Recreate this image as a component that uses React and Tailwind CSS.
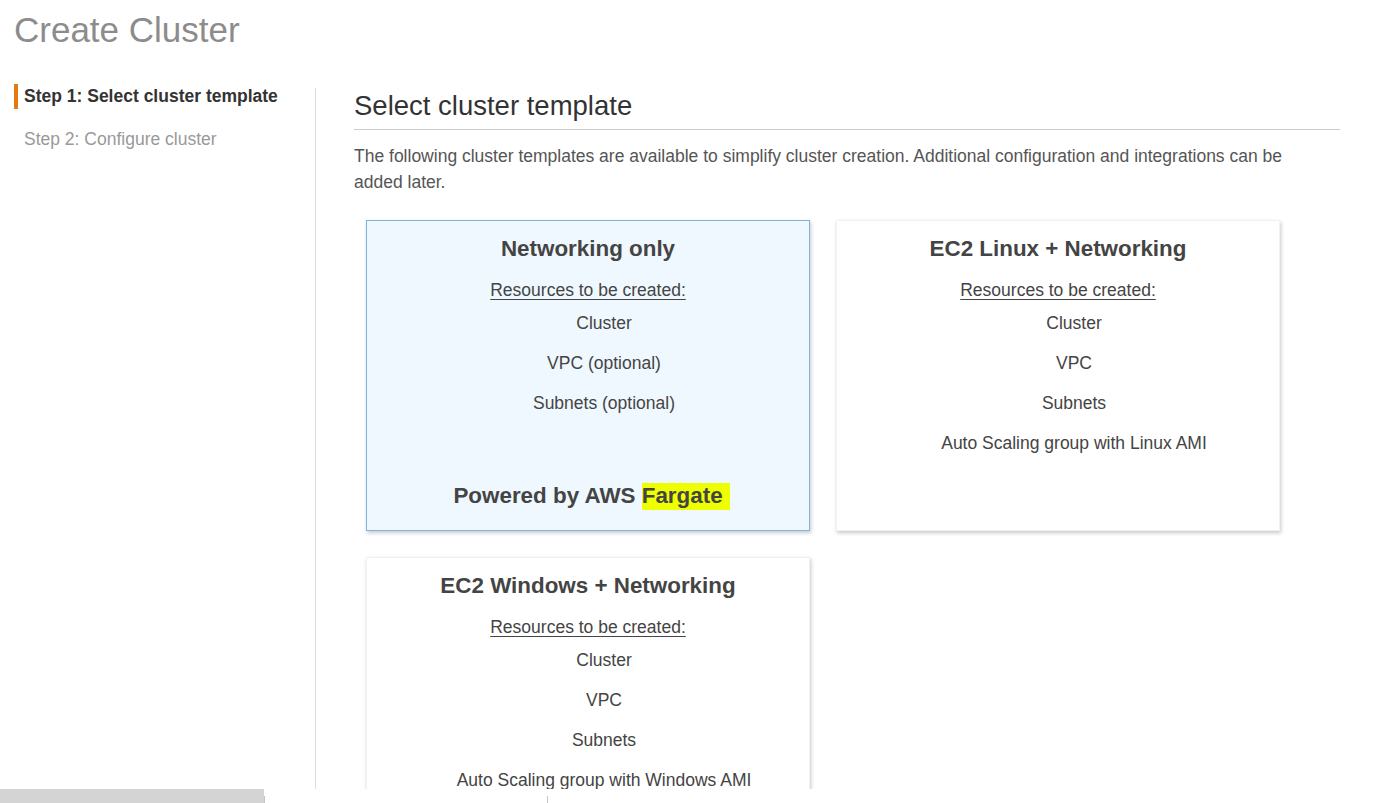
import React from 'react';

const templates = [
  {
    id: 'fargate',
    title: 'Networking only',
    resources: ['Cluster', 'VPC (optional)', 'Subnets (optional)'],
    selected: true,
    fargate: true,
  },
  {
    id: 'linux',
    title: 'EC2 Linux + Networking',
    resources: ['Cluster', 'VPC', 'Subnets', 'Auto Scaling group with Linux AMI'],
  },
  {
    id: 'windows',
    title: 'EC2 Windows + Networking',
    resources: ['Cluster', 'VPC', 'Subnets', 'Auto Scaling group with Windows AMI'],
  },
];

function TemplateCard({ item }) {
  return (
    <div
      className={`flex flex-col h-[311px] border text-center text-[#444] shadow-[1px_2px_4px_rgba(0,0,0,0.22)] ${
        item.selected ? 'bg-[#f0f8ff] border-[#80b3e2]' : 'bg-white border-[#f2f2f2]'
      }`}
    >
      <h3 className="pt-[14px] text-[22.4px] font-bold leading-[28px]">{item.title}</h3>
      <div className="mt-[14px] text-[17.5px] leading-[26px] underline underline-offset-[3px]">
        Resources to be created:
      </div>
      <ul className="pl-8 text-[17.5px] leading-[40px]">
        {item.resources.map((r) => (
          <li key={r}>{r}</li>
        ))}
      </ul>
      {item.fargate && (
        <div className="mt-auto pl-[7px] pb-[20px] text-[22.4px] font-bold leading-[28px]">
          Powered by AWS <span className="bg-[#eeff00] pr-[7px] pb-[2px]">Fargate</span>
        </div>
      )}
    </div>
  );
}

export default function App() {
  return (
    <div className="h-screen flex flex-col overflow-hidden bg-white font-['Liberation_Sans',Arial,sans-serif]">
      <div className="flex-1 flex flex-col overflow-hidden">
        <h1 className="pl-[14px] pt-[10px] h-[84px] text-[35px] leading-[40px] text-[#8c8c8c]">Create Cluster</h1>
        <div className="flex flex-1 min-h-0">
          <nav className="w-[315px] shrink-0">
            <div className="flex items-center h-[25px] pl-[14px]">
              <span className="w-[4px] h-[25px] bg-[#e47911]" />
              <span className="ml-[6px] text-[17.5px] font-bold text-[#333]">Step 1: Select cluster template</span>
            </div>
            <div className="mt-[18px] pl-[24px] h-[25px] leading-[25px] text-[17.5px] text-[#999]">
              Step 2: Configure cluster
            </div>
          </nav>
          <main className="flex-1 mt-[4px] border-l border-[#dedede] pl-[38px] pr-[52px]">
            <h2 className="pt-px text-[27.5px] leading-[34px] text-[#333] pb-[6px] border-b border-[#cccccc]">
              Select cluster template
            </h2>
            <p className="mt-[13px] max-w-[965px] text-[17.5px] leading-[26px] text-[#555]">
              The following cluster templates are available to simplify cluster creation. Additional configuration and
              integrations can be added later.
            </p>
            <div className="mt-[25px] pl-[12px] grid grid-cols-[444px_444px] gap-[26px]">
              {templates.map((t) => (
                <TemplateCard key={t.id} item={t} />
              ))}
            </div>
          </main>
        </div>
      </div>
      <div className="h-[14px] shrink-0 flex items-end bg-white">
        <div className="w-[264px] h-[14px] bg-[#d4d4d4]" />
        <div className="w-px h-[7px] bg-[#c4c4c4]" />
        <div className="w-[282px]" />
        <div className="w-px h-[7px] bg-[#c4c4c4]" />
      </div>
    </div>
  );
}
